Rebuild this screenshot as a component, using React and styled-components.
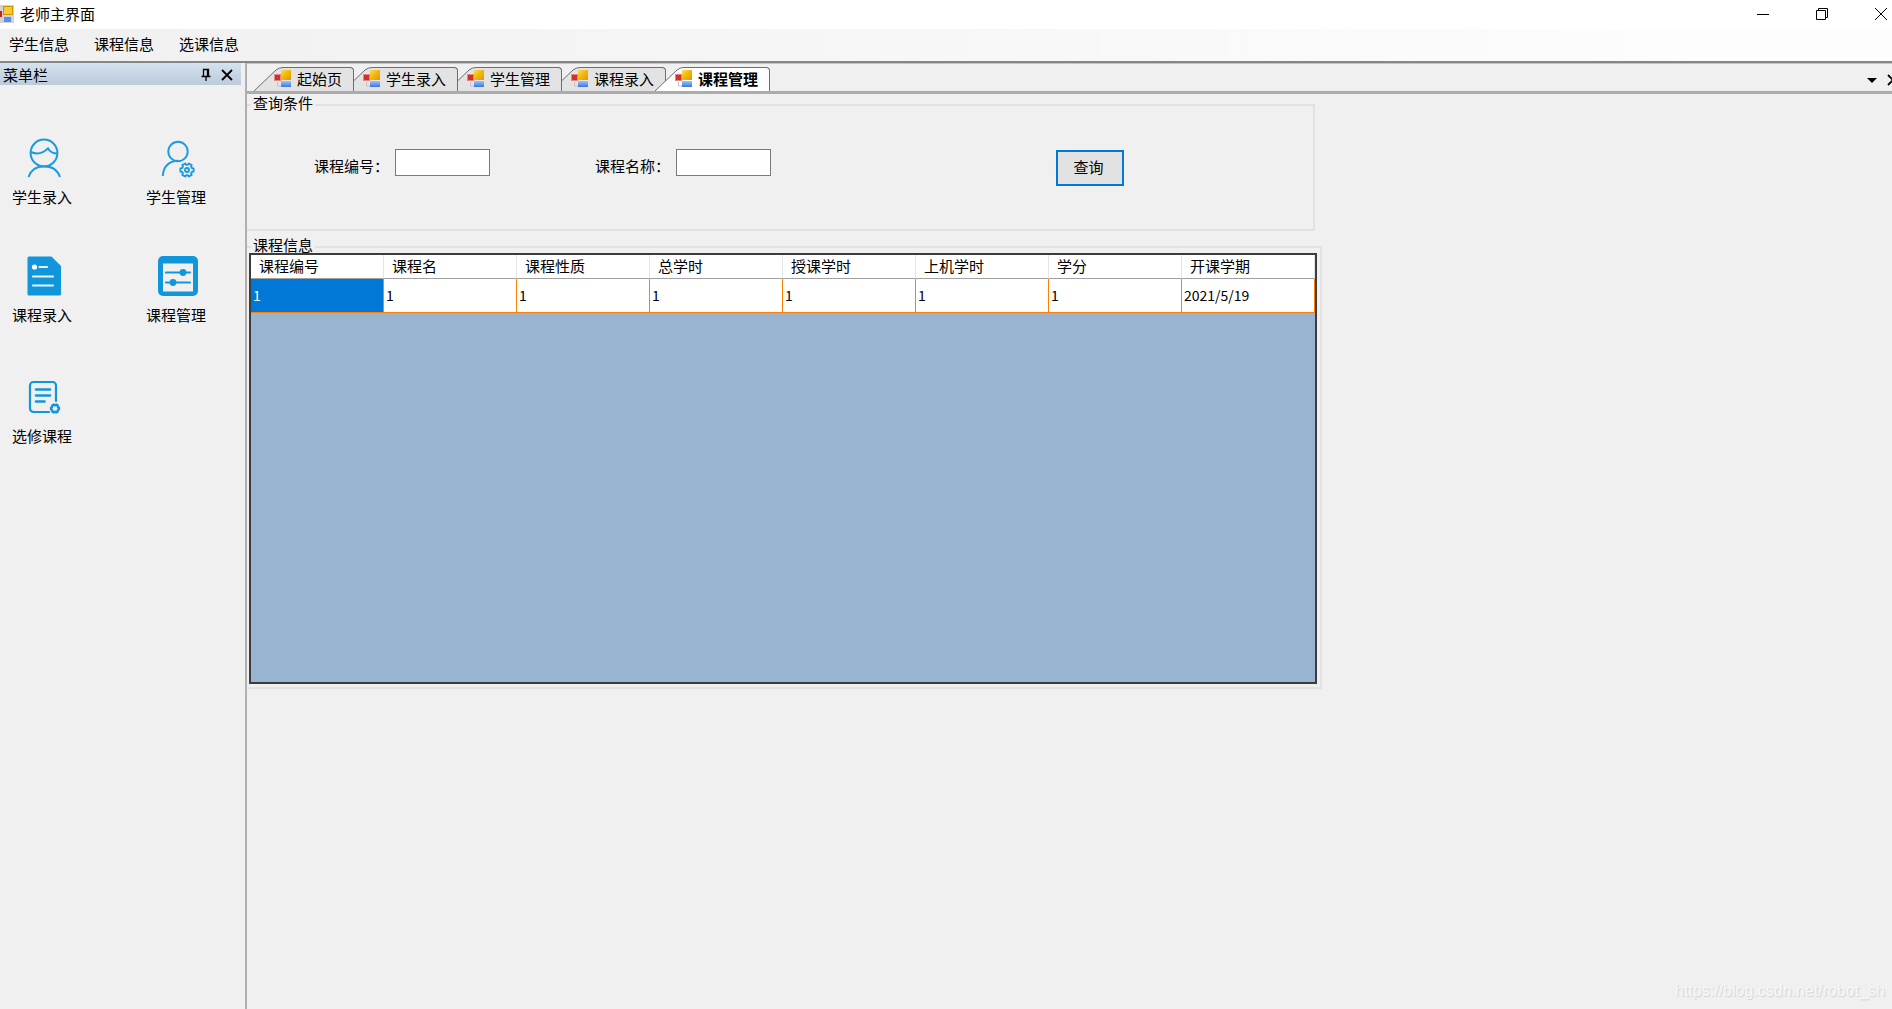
import React from 'react'
import styled, { createGlobalStyle, css } from 'styled-components'

const menus = ['学生信息', '课程信息', '选课信息']

const tabs = ['起始页', '学生录入', '学生管理', '课程录入', '课程管理']

const columns = ['课程编号', '课程名', '课程性质', '总学时', '授课学时', '上机学时', '学分', '开课学期']

const rows = [['1', '1', '1', '1', '1', '1', '1', '2021/5/19']]

// six teeth, two outer and two inner points for each
const gearPoints = (cx, cy, r) => {
  const list = []
  for (let i = 0; i < 6; i++) {
    [[-14, 1], [14, 1], [22, 0.76], [38, 0.76]].forEach(([deg, k]) => {
      const a = ((i * 60 + deg) * Math.PI) / 180
      list.push(`${(cx + r * k * Math.cos(a)).toFixed(2)},${(cy + r * k * Math.sin(a)).toFixed(2)}`)
    })
  }
  return list.join(' ')
}

function FormIcon() {
  return (
    <svg width="17" height="18" viewBox="0 0 17 18" aria-hidden="true">
      <defs>
        <linearGradient id="gold" x1="0" y1="0" x2="1" y2="1">
          <stop offset="0" stopColor="#ffd95a" />
          <stop offset="0.5" stopColor="#f2b705" />
          <stop offset="1" stopColor="#d99a00" />
        </linearGradient>
        <linearGradient id="blue" x1="0" y1="0" x2="0" y2="1">
          <stop offset="0" stopColor="#9cc4ff" />
          <stop offset="1" stopColor="#3f74e0" />
        </linearGradient>
      </defs>
      <path d="M3.500 12v4H7" fill="none" stroke="#c4c4c4" />
      <rect x="0" y="4" width="7" height="7" fill="#e08a86" />
      <rect x="1" y="5" width="5" height="5" fill="#d42f2a" />
      <rect x="7" y="0" width="10" height="10" fill="url(#gold)" />
      <rect x="7" y="11" width="10" height="6" fill="url(#blue)" />
    </svg>
  )
}

function WindowIcon() {
  return (
    <svg width="14" height="18" viewBox="0 0 14 18" aria-hidden="true">
      <rect width="14" height="18" fill="#d2d2d2" />
      <rect x="0" y="6" width="2" height="6" fill="#c8201c" />
      <rect x="3" y="1" width="10" height="9" fill="#c99700" />
      <rect x="4" y="2" width="8" height="7" fill="#f8c932" />
      <rect x="4" y="12" width="7" height="5" fill="#5b8def" />
    </svg>
  )
}

function StudentAddIcon() {
  return (
    <svg width="40" height="40" viewBox="0 0 40 40" fill="none" stroke="#1b9ae0" strokeWidth="2" aria-hidden="true">
      <circle cx="20" cy="15" r="13.4" />
      <path d="M7 14c6 2.600 12 1.400 17-3.600 2 3.400 5 5 9.400 5" />
      <path d="M4.500 39C7 32 12.500 28.300 20 28.300S33.500 32 36 39" />
    </svg>
  )
}

function StudentManageIcon() {
  return (
    <svg width="40" height="40" viewBox="0 0 40 40" fill="none" stroke="#1b9ae0" strokeWidth="1.900" aria-hidden="true">
      <circle cx="20" cy="13.500" r="9.700" />
      <path d="M4.800 38C5 29 11 22.700 20 22.700" />
      <polygon points={gearPoints(29, 32, 6.8)} strokeLinejoin="round" />
      <circle cx="29" cy="32" r="2" />
    </svg>
  )
}

function CourseAddIcon() {
  return (
    <svg width="40" height="40" viewBox="0 0 40 40" aria-hidden="true">
      <path d="M5 0.500h22.500L37 10v28a1.500 1.500 0 0 1-1.500 1.500H5A1.500 1.500 0 0 1 3.500 38V2A1.500 1.500 0 0 1 5 0.500z" fill="#1296db" />
      <circle cx="10.500" cy="11" r="2.600" fill="#fff" />
      <path d="M15.500 11h7.500M9 20.500h20M9 29.500h20" stroke="#e3f3fc" strokeWidth="2.200" strokeLinecap="round" />
    </svg>
  )
}

function CourseManageIcon() {
  return (
    <svg width="40" height="40" viewBox="0 0 40 40" aria-hidden="true">
      <path fillRule="evenodd" d="M5 0h30a5 5 0 0 1 5 5v30a5 5 0 0 1-5 5H5a5 5 0 0 1-5-5V5a5 5 0 0 1 5-5zM5 7.500v28h30v-28z" fill="#1296db" />
      <path d="M8 16.500h24M8 26.500h24" stroke="#1296db" strokeWidth="2.200" strokeLinecap="round" />
      <circle cx="25" cy="16.500" r="3.400" fill="#1296db" />
      <circle cx="15" cy="26.500" r="3.400" fill="#1296db" />
    </svg>
  )
}

function ElectiveIcon() {
  return (
    <svg width="40" height="40" viewBox="0 0 40 40" fill="none" stroke="#1296db" strokeWidth="2.600" strokeLinecap="round" aria-hidden="true">
      <path d="M25 35H9.500A3.500 3.500 0 0 1 6 31.500v-23A3.500 3.500 0 0 1 9.500 5h19A3.500 3.500 0 0 1 32 8.500V24" strokeWidth="2.200" />
      <path d="M12 12.500h14M12 18.500h14M12 24.500h8.500" />
      <polygon points={gearPoints(31, 31.5, 4.2)} strokeLinejoin="round" strokeWidth="2.200" />
    </svg>
  )
}

const shortcuts = [
  { label: '学生录入', Icon: StudentAddIcon },
  { label: '学生管理', Icon: StudentManageIcon },
  { label: '课程录入', Icon: CourseAddIcon },
  { label: '课程管理', Icon: CourseManageIcon },
  { label: '选修课程', Icon: ElectiveIcon },
]

function App() {
  return (
    <Window>
      <GlobalStyle />
      <TitleBar>
        <WindowIcon />
        <Title>老师主界面</Title>
        <WindowButtons>
          <IconButton aria-label="最小化">
            <svg width="14" height="14" viewBox="0 0 14 14"><path d="M1 7.500h12" stroke="#000" /></svg>
          </IconButton>
          <IconButton aria-label="还原">
            <svg width="14" height="14" viewBox="0 0 14 14" fill="none" stroke="#000">
              <path d="M1.500 3.500h9v9h-9zM3.500 3.500v-2h9v9h-2" />
            </svg>
          </IconButton>
          <IconButton aria-label="关闭">
            <svg width="14" height="14" viewBox="0 0 14 14"><path d="M1 1l12 12M13 1L1 13" stroke="#000" /></svg>
          </IconButton>
        </WindowButtons>
      </TitleBar>

      <MenuBar>
        {menus.map((menu) => <MenuItem key={menu}>{menu}</MenuItem>)}
      </MenuBar>

      <Body>
        <SideBar>
          <SideHeader>
            <SideTitle>菜单栏</SideTitle>
            <IconButton aria-label="固定">
              <svg width="14" height="14" viewBox="0 0 14 14" fill="none" stroke="#000">
                <path d="M4.500 8V1.500h5V8M8.500 1.500V8M2.500 8.500h9M7 9v4" strokeWidth="1.300" />
              </svg>
            </IconButton>
            <IconButton aria-label="关闭菜单栏">
              <svg width="14" height="14" viewBox="0 0 14 14"><path d="M2 2l10 10M12 2L2 12" stroke="#000" strokeWidth="1.800" /></svg>
            </IconButton>
          </SideHeader>
          <Shortcuts>
            {shortcuts.map(({ label, Icon }) => (
              <Shortcut key={label}>
                <ShortcutIcon><Icon /></ShortcutIcon>
                {label}
              </Shortcut>
            ))}
          </Shortcuts>
        </SideBar>

        <Main>
          <TabStrip>
            <TabList role="tablist">
              {tabs.map((tab, i) => {
                const active = i === tabs.length - 1
                return (
                  <Tab
                    key={tab}
                    role="tab"
                    aria-selected={active}
                    $active={active}
                    $first={i === 0}
                    $level={active ? tabs.length + 1 : tabs.length - i}
                  >
                    <TabSlope $first={i === 0} width="40" height="24" viewBox="0 0 40 24" aria-hidden="true">
                      <path d="M0 24L22 3Q25 0.500 29 0.500H40V24z" fill={active ? '#fff' : '#e3e3e3'} />
                      <path d="M0 24L22 3Q25 0.500 29 0.500H40" fill="none" stroke="#6e6e6e" />
                    </TabSlope>
                    <TabContent>
                      <FormIcon />
                      {tab}
                    </TabContent>
                  </Tab>
                )
              })}
            </TabList>
            <StripButtons>
              <IconButton aria-label="窗口列表">
                <svg width="14" height="14" viewBox="0 0 14 14"><path d="M2 5h10L7 10z" /></svg>
              </IconButton>
              <IconButton aria-label="关闭标签">
                <svg width="14" height="14" viewBox="0 0 14 14"><path d="M2 2l10 10M12 2L2 12" stroke="#000" strokeWidth="1.800" /></svg>
              </IconButton>
            </StripButtons>
          </TabStrip>

          <SearchGroup>
            <Legend>查询条件</Legend>
            <SearchRow>
              <Field>
                <FieldLabel htmlFor="courseId">课程编号：</FieldLabel>
                <TextBox id="courseId" type="text" />
              </Field>
              <Field>
                <FieldLabel htmlFor="courseName">课程名称：</FieldLabel>
                <TextBox id="courseName" type="text" />
              </Field>
              <SearchButton>查询</SearchButton>
            </SearchRow>
          </SearchGroup>

          <InfoGroup>
            <Legend>课程信息</Legend>
            <GridBox>
              <Table>
                <thead>
                  <tr>
                    {columns.map((column) => <HeadCell key={column}>{column}</HeadCell>)}
                  </tr>
                </thead>
                <tbody>
                  {rows.map((row, r) => (
                    <tr key={r}>
                      {row.map((value, c) => <Cell key={c} $selected={r === 0 && c === 0}>{value}</Cell>)}
                    </tr>
                  ))}
                </tbody>
              </Table>
            </GridBox>
          </InfoGroup>
        </Main>
      </Body>
      <Watermark>https://blog.csdn.net/robot_sh</Watermark>
    </Window>
  )
}

const GlobalStyle = createGlobalStyle`
    * {
        box-sizing: border-box;
    }

    body {
        margin: 0;
        background-color: #f0f0f0;
    }

    body, button, input {
        font-family: "Noto Sans CJK SC", sans-serif;
        font-size: 15px;
        line-height: 20px;
        color: #000;
    }
`;

const Window = styled.div`
    min-height: 100vh;
    display: flex;
    flex-direction: column;
    position: relative;
    overflow: hidden;
`;

const TitleBar = styled.header`
    height: 29px;
    display: flex;
    align-items: center;
    padding-bottom: 2px;
    background-color: #fff;
`;

const Title = styled.h1`
    margin: 0 0 0 6px;
    flex: 1;
    font-size: 15px;
    font-weight: normal;
`;

const WindowButtons = styled.div`
    display: flex;
    gap: 45px;
    padding-right: 4px;
`;

const IconButton = styled.button`
    width: 14px;
    height: 14px;
    padding: 0;
    border: none;
    background: none;
    display: flex;
    flex-shrink: 0;
`;

const MenuBar = styled.nav`
    height: 34px;
    display: flex;
    align-items: center;
    gap: 25px;
    padding: 0 0 2px 9px;
    background: linear-gradient(to right, #f0f0f0, #fdfdfd 90%);
    border-bottom: 2px solid #868686;
`;

const MenuItem = styled.button`
    padding: 0;
    border: none;
    background: none;
`;

const Body = styled.div`
    flex: 1;
    display: flex;
`;

const SideBar = styled.aside`
    width: 245px;
    flex-shrink: 0;
`;

const SideHeader = styled.div`
    width: 241px;
    height: 22px;
    display: flex;
    align-items: center;
    gap: 7px;
    padding: 2px 7px 0 3px;
    background: linear-gradient(#d5e2ef, #bccbda);
`;

const SideTitle = styled.span`
    flex: 1;
`;

const Shortcuts = styled.div`
    display: grid;
    grid-template-columns: 134px 1fr;
    grid-template-rows: 118px 121px auto;
    padding: 53px 0 0 12px;
    justify-items: start;
    align-items: start;
`;

const Shortcut = styled.button`
    display: flex;
    flex-direction: column;
    align-items: flex-start;
    gap: 8px;
    padding: 0;
    border: none;
    background: none;
`;

const ShortcutIcon = styled.span`
    height: 41px;
    padding-left: 12px;
`;

const Main = styled.main`
    flex: 1;
    min-width: 0;
    border-left: 2px solid #b0b0b0;
`;

const TabStrip = styled.div`
    height: 31px;
    display: flex;
    align-items: flex-end;
    border-top: 1px solid #c4c4c4;
    border-bottom: 3px solid #acacac;
`;

const TabList = styled.div`
    flex: 1;
    display: flex;
    padding-left: 7px;
`;

const Tab = styled.button`
    width: ${({ $first }) => ($first ? '100px' : '104px')};
    height: 24px;
    position: relative;
    z-index: ${({ $level }) => $level};
    padding: 0;
    border: none;
    background: none;
    font-weight: ${({ $active }) => ($active ? 'bold' : 'normal')};

    &::before {
        content: "";
        position: absolute;
        inset: 0 0 0 28px;
        border: solid #6e6e6e;
        border-width: 1px 1px 0 0;
        border-top-right-radius: 4px;
        background-color: ${({ $active }) => ($active ? '#fff' : '#e3e3e3')};
    }
`;

const TabSlope = styled.svg`
    position: absolute;
    top: 0;
    left: ${({ $first }) => ($first ? '0' : '-11px')};
`;

const TabContent = styled.span`
    position: relative;
    display: flex;
    align-items: center;
    justify-content: flex-end;
    gap: 6px;
    padding: 0 12px 1px 0;
`;

const StripButtons = styled.div`
    display: flex;
    gap: 7px;
    align-self: center;
    margin-right: -8px;
    padding-top: 4px;
`;

const Group = styled.fieldset`
    min-width: 0;
    margin: 0;
    padding: 0;
    border: 2px solid #e2e2e2;
    border-left: none;
`;

const SearchGroup = styled(Group)`
    width: 1068px;
    height: 136px;
    margin-top: 1px;
`;

const InfoGroup = styled(Group)`
    width: 1075px;
    margin-top: 6px;
`;

const Legend = styled.legend`
    height: 20px;
    margin-left: 4px;
    padding: 0 2px;
    line-height: 16px;
`;

const SearchRow = styled.div`
    display: flex;
    align-items: flex-start;
    padding: 34px 0 0 67px;
`;

const Field = styled.div`
    width: 281px;
    display: flex;
    align-items: flex-start;
    gap: 6px;
`;

const FieldLabel = styled.label`
    padding-top: 7px;
`;

const TextBox = styled.input`
    width: 95px;
    height: 27px;
    padding: 2px 4px;
    border: 1px solid #7a7a7a;
    background-color: #fff;
`;

const SearchButton = styled.button`
    width: 68px;
    height: 36px;
    margin: 1px 0 0 180px;
    padding: 0 3px 2px 0;
    border: 2px solid #0078d7;
    background-color: #e1e1e1;
`;

const GridBox = styled.div`
    height: 431px;
    margin: -4px 3px 3px 2px;
    border: 2px solid #3c3c3c;
    background-color: #99b4d1;
`;

const Table = styled.table`
    width: 100%;
    table-layout: fixed;
    border-collapse: separate;
    border-spacing: 0;
    background-color: #fff;
`;

const HeadCell = styled.th`
    height: 24px;
    padding: 0 0 2px 8px;
    border-right: 1px solid #e5e5e5;
    border-bottom: 1px solid #a0a0a0;
    font-weight: normal;
    text-align: left;
`;

const Cell = styled.td`
    height: 34px;
    padding: 0 0 2px 2px;
    border-right: 1px solid #ff8000;
    border-bottom: 1px solid #ff8000;
    font-size: 14px;
    ${({ $selected }) => $selected && css`
        background-color: #0078d7;
        color: #fff;
    `}
`;

const Watermark = styled.div`
    position: absolute;
    right: 7px;
    bottom: 8px;
    font-family: "Liberation Sans", sans-serif;
    font-size: 16px;
    color: #f7f7f7;
    text-shadow: 1px 1px 1px #d0d0d0;
`;

export default App
